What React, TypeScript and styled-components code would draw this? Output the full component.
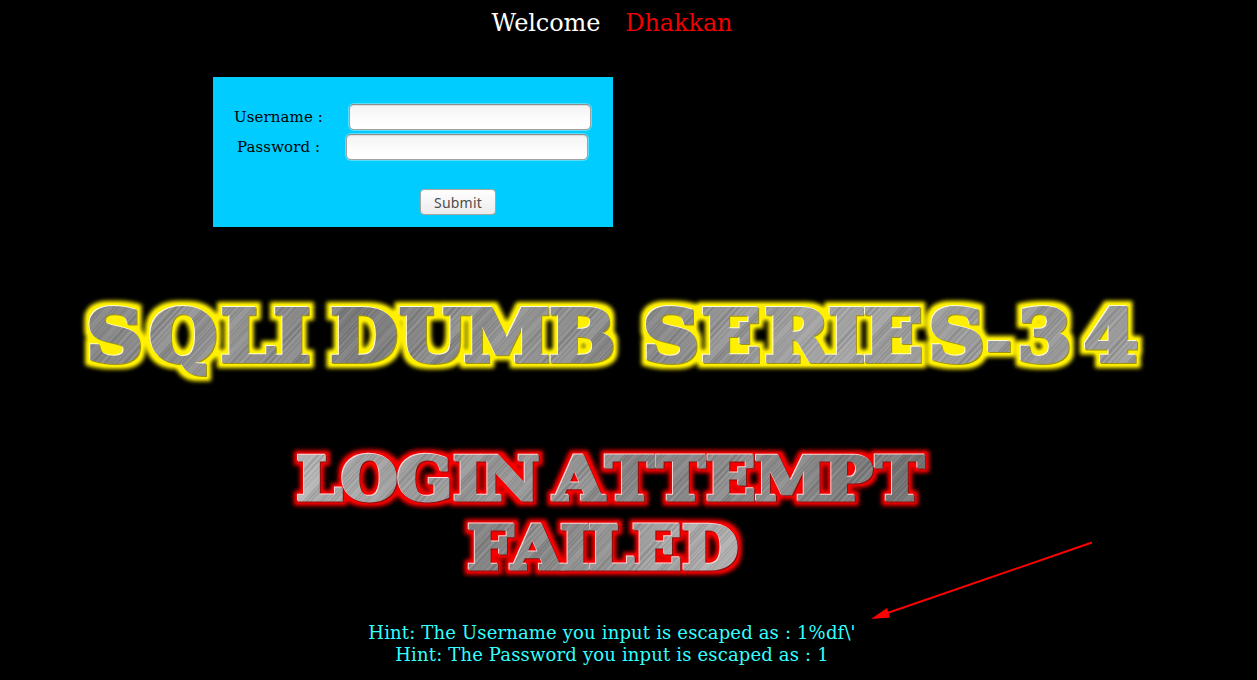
import React from "react";
import styled, { createGlobalStyle } from "styled-components";

const GlobalStyle = createGlobalStyle`
  html, body { margin: 0; background: #000; }
  body { overflow: hidden; }
`;

const Page = styled.main`
  position: relative;
  width: 1224px;
  height: 680px;
  background: #000;
  font-family: "DejaVu Serif", serif;
  display: flex;
  flex-direction: column;
  align-items: center;
`;

const Welcome = styled.header`
  display: flex;
  gap: 25px;
  height: 77px;
  padding-top: 9px;
  box-sizing: border-box;
  font-size: 24px;
  line-height: 28px;
  letter-spacing: -0.1px;
  color: #fff;
`;

const Name = styled.span`
  color: #f00000;
`;

const LoginForm = styled.form`
  align-self: flex-start;
  box-sizing: border-box;
  width: 400px;
  height: 150px;
  margin-left: 213px;
  padding: 26px 0 0 21px;
  background: #0cf;
`;

const Field = styled.label<{ $indent?: number; $gap: number }>`
  display: flex;
  align-items: center;
  height: 30px;
  padding-left: ${(p) => p.$indent ?? 0}px;
  gap: ${(p) => p.$gap}px;
  font-size: 15px;
  line-height: 28px;
  letter-spacing: 0.1px;
  color: #000;
  white-space: nowrap;
`;

const Label = styled.span`
  width: 90px;
  margin-top: -2px;
`;

const Input = styled.input`
  box-sizing: border-box;
  width: 242px;
  height: 26px;
  margin: 0 0 2px;
  border: 1px solid #a5a19d;
  border-top-color: #8e8b88;
  border-radius: 5px;
  background: linear-gradient(#f3f3f3, #fff 80%);
  box-shadow: 0 0 0 1px rgba(255, 255, 255, 0.35), inset 0 1px 1px #ddd;
  outline: none;
`;

const Submit = styled.button`
  display: block;
  box-sizing: border-box;
  width: 76px;
  height: 26px;
  margin: 26px 0 0 186px;
  padding: 1px 0 0;
  border: 1px solid #a9a5a1;
  border-radius: 4px;
  background: linear-gradient(#fff, #ebebeb);
  color: #4c4c4c;
  font: 14px/23px "Noto Sans", sans-serif;
  letter-spacing: 0.2px;
`;

const Banner = styled.svg`
  display: block;
  width: 1224px;
  height: 393px;
  flex: none;
`;

const Hints = styled.section`
  padding-top: 2px;
  font-size: 18px;
  line-height: 22px;
  letter-spacing: 0.16px;
  text-align: center;
  color: #3ff;
  white-space: pre;
`;

const Arrow = styled.svg`
  position: absolute;
  left: 866px;
  top: 536px;
  width: 232px;
  height: 88px;
`;

type LineProps = {
  children: React.ReactNode;
  centers: number[];
  baseline: number;
  size: number;
  stretch: number;
  weight: number;
  tone: "yellow" | "red";
};

const MetalLine = ({ children, centers, baseline, size, stretch, weight, tone }: LineProps) => (
  <g filter={`url(#glow-${tone})`}>
    <text
      transform={`scale(${stretch} 1)`}
      x={centers.map((c) => (c / stretch).toFixed(2)).join(" ")}
      y={baseline}
      textAnchor="middle"
      fontFamily="DejaVu Serif"
      fontWeight="700"
      fontSize={size}
      fill={`url(#metal-${tone})`}
      stroke={`url(#metal-${tone})`}
      strokeWidth={weight}
    >
      {children}
    </text>
  </g>
);

const Glow = ({ id, color, shade, spread, blur }: { id: string; color: string; shade: string; spread: number; blur: number }) => (
  <filter id={id} filterUnits="userSpaceOnUse" x="0" y="0" width="1224" height="393" colorInterpolationFilters="sRGB">
    <feMorphology in="SourceAlpha" operator="dilate" radius={spread} result="wide" />
    <feGaussianBlur in="wide" stdDeviation={blur} result="soft" />
    <feComponentTransfer in="soft" result="strong">
      <feFuncA type="linear" slope="1.1" />
    </feComponentTransfer>
    <feFlood floodColor={color} />
    <feComposite in2="strong" operator="in" result="halo" />
    <feOffset in="SourceAlpha" dx="-1" dy="-1" result="upper" />
    <feFlood floodColor="#fff" floodOpacity="0.85" />
    <feComposite in2="upper" operator="in" result="light" />
    <feOffset in="SourceAlpha" dx="1" dy="1" result="lower" />
    <feFlood floodColor={shade} floodOpacity="0.7" />
    <feComposite in2="lower" operator="in" result="dark" />
    <feMerge>
      <feMergeNode in="halo" />
      <feMergeNode in="dark" />
      <feMergeNode in="light" />
      <feMergeNode in="SourceGraphic" />
    </feMerge>
  </filter>
);

const streaks = Array.from({ length: 97 }, (_, i) => {
  const n = Math.abs(Math.sin(i * 91.7 + 3) * 4375.85) % 1;
  return { y: i, light: n > 0.5, opacity: Math.abs(n - 0.5) * 0.27 };
});

const Metal = ({ id, stops }: { id: string; stops: [number, string][] }) => (
  <>
    <linearGradient id={`${id}-tone`} gradientUnits="userSpaceOnUse" x1="80" y1="0" x2="1145" y2="60">
      {stops.map(([at, color]) => (
        <stop key={at} offset={at} stopColor={color} />
      ))}
    </linearGradient>
    <pattern id={id} patternUnits="userSpaceOnUse" width="1300" height="400">
      <rect width="1300" height="400" fill={`url(#${id}-tone)`} />
      <rect width="1300" height="400" fill="url(#streaks)" />
    </pattern>
  </>
);

export default function App() {
  return (
    <>
      <GlobalStyle />
      <Page>
        <Welcome>
          <span>Welcome</span>
          <Name>Dhakkan</Name>
        </Welcome>
        <LoginForm onSubmit={(e) => e.preventDefault()}>
          <Field $gap={25}>
            <Label>Username :</Label>
            <Input type="text" name="uname" />
          </Field>
          <Field $indent={3} $gap={19}>
            <Label>Password :</Label>
            <Input type="text" name="passwd" />
          </Field>
          <Submit type="submit">Submit</Submit>
        </LoginForm>
        <Banner viewBox="0 0 1224 393">
          <defs>
            <pattern id="streaks" patternUnits="userSpaceOnUse" width="400" height="97" patternTransform="rotate(-50)">
              {streaks.map((s) => (
                <rect key={s.y} y={s.y} width="400" height="1" fill={s.light ? "#fff" : "#000"} opacity={s.opacity} />
              ))}
            </pattern>
            <Metal id="metal-yellow" stops={[[0, "#858585"], [0.12, "#969696"], [0.24, "#7d7d7d"], [0.36, "#969696"], [0.48, "#878787"], [0.62, "#a5a5a5"], [0.8, "#999"], [1, "#a0a0a0"]]} />
            <Metal id="metal-red" stops={[[0.2, "#b5b5b5"], [0.3, "#999"], [0.41, "#989898"], [0.49, "#858585"], [0.6, "#909090"], [0.66, "#7d7d7d"], [0.8, "#6e6e6e"]]} />
            <Metal id="metal-silver" stops={[[0.36, "#858585"], [0.46, "#969696"], [0.54, "#b0b0b0"], [0.62, "#b5b5b5"]]} />
            <Glow id="glow-yellow" color="#fff000" shade="#746b18" spread={5} blur={2.3} />
            <Glow id="glow-red" color="#f80000" shade="#5c1414" spread={4} blur={2} />
          </defs>
          <MetalLine
            tone="yellow"
            centers={[114.5, 183, 248, 292, 319, 364, 433, 507, 582, 629, 671, 731, 797, 846.5, 893, 956.5, 999, 1044.5, 1111]}
            baseline={134.5}
            size={70.5}
            weight={4}
            stretch={1.1}
          >
            SQLI DUMB SERIES<tspan fontSize="52">-</tspan>34
          </MetalLine>
          <MetalLine
            tone="red"
            centers={[319.5, 369.5, 425, 468.5, 510, 545, 579, 630, 681, 731, 791, 848.5, 900]}
            baseline={273.5}
            size={59}
            weight={3.2}
            stretch={1.1}
          >
            LOGIN ATTEMPT
          </MetalLine>
          <MetalLine
            tone="red"
            centers={[490.5, 537, 575.5, 611.5, 657, 710.5]}
            baseline={342.5}
            size={59}
            weight={3.2}
            stretch={1.1}
          >
            <tspan fill="url(#metal-silver)" stroke="url(#metal-silver)">FAILED</tspan>
          </MetalLine>
        </Banner>
        <Hints>
          <div>Hint: The Username you input is escaped as : 1%df\'</div>
          <div>Hint: The Password you input is escaped as : 1</div>
        </Hints>
        <Arrow viewBox="866 536 232 88">
          <path d="M1092 542.5 L886 613.5" stroke="#f00" strokeWidth="2" />
          <path d="M871 619 L887 608 L890 617.5 Z" fill="#f00" />
        </Arrow>
      </Page>
    </>
  );
}
